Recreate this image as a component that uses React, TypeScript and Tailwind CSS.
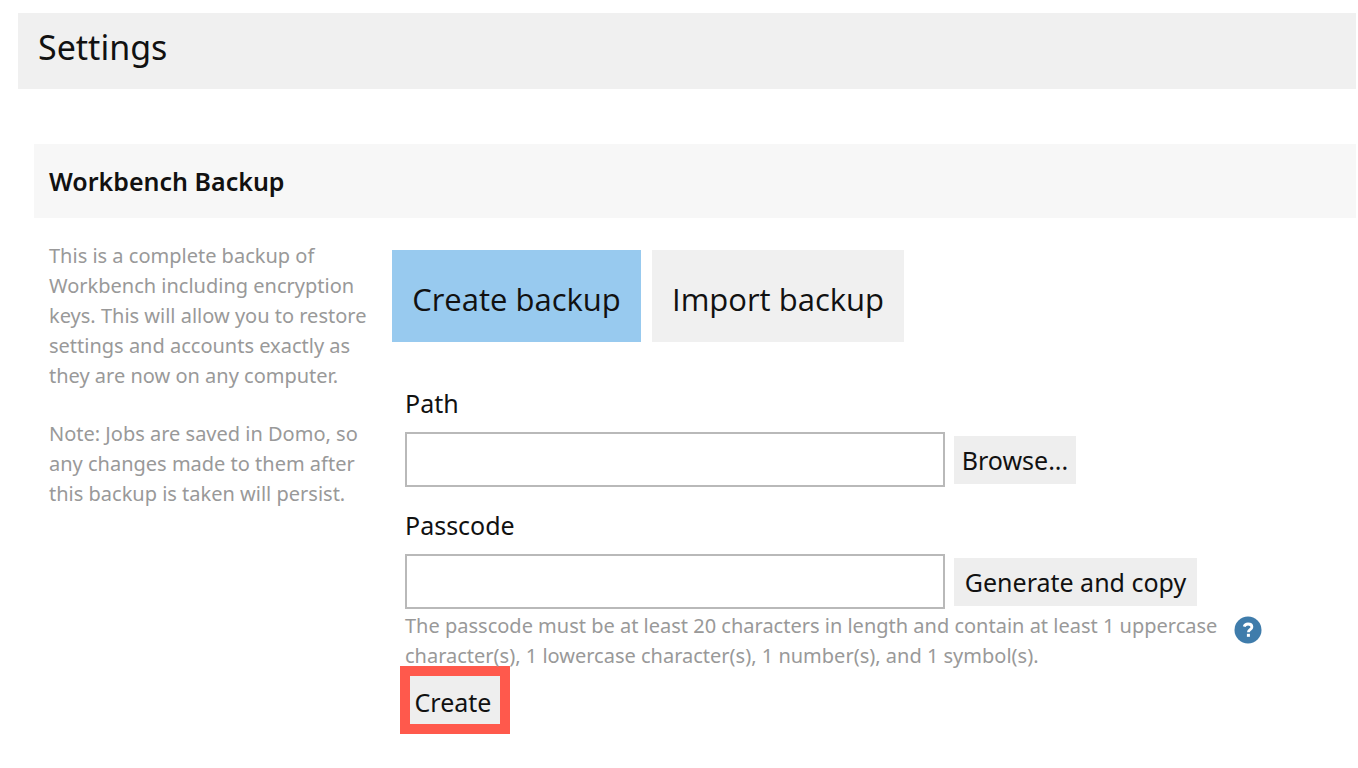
import { useState } from 'react';

const TABS = [
  { id: 'create', label: 'Create backup', width: 'w-[249px]' },
  { id: 'import', label: 'Import backup', width: 'w-[252px]' },
];

const ABOUT = [
  [
    'This is a complete backup of',
    'Workbench including encryption',
    'keys. This will allow you to restore',
    'settings and accounts exactly as',
    'they are now on any computer.',
  ],
  [
    'Note: Jobs are saved in Domo, so',
    'any changes made to them after',
    'this backup is taken will persist.',
  ],
];

const HelpIcon = () => (
  <svg viewBox="0 0 28 28" className="size-7" aria-hidden="true">
    <circle cx="14" cy="14" r="13.5" fill="#3f7cab" />
    <path d="M10.2 10.6C10.8 8.7 12.2 8 14 8c2.300 0 3.900 1.100 3.900 3 0 2.700-3.500 2.700-3.500 5.200" fill="none" stroke="#fff" strokeWidth="2.8" />
    <rect x="12.900" y="17.800" width="3" height="3" fill="#fff" />
  </svg>
);

function Field({ id, label, action, actionWidth }: { id: string; label: string; action: string; actionWidth: string }) {
  return (
    <div>
      <label htmlFor={id} className="block text-[25px] leading-[34px]">{label}</label>
      <div className="mt-3 flex items-center gap-[9px]">
        <input id={id} type="text" className="h-[55px] w-full min-w-0 max-w-[540px] border-2 border-[#b9b9b9] bg-white px-3 text-[25px] outline-none" />
        <button type="button" className={`h-12 shrink-0 bg-[#eeeeee] pt-[2px] text-[25px] whitespace-nowrap ${actionWidth}`}>{action}</button>
      </div>
    </div>
  );
}

export default function App() {
  const [tab, setTab] = useState('create');

  return (
    <div className="bg-white pt-[13px] pr-[2px] pl-[18px] font-['Noto_Sans','Open_Sans',sans-serif] text-[#111111]">
      <header className="flex h-[76px] items-center bg-[#f0f0f0] px-5 pb-2">
        <h1 className="text-[34px] leading-10">Settings</h1>
      </header>

      <main className="mt-[55px] pl-4">
        <div className="flex h-[74px] items-center bg-[#f7f7f7] px-[15px]">
          <h2 className="text-[25px] leading-9 font-semibold">Workbench Backup</h2>
        </div>

        <div className="flex pt-[23px]">
          <aside className="w-[358px] shrink-0 space-y-7 pl-[15px] text-[20px] leading-[30px] text-[#999999]">
            {ABOUT.map((lines) => (
              <p key={lines[0]}>
                {lines.map((line) => (
                  <span key={line} className="block whitespace-nowrap">{line}</span>
                ))}
              </p>
            ))}
          </aside>

          <section className="min-w-0 flex-1 pt-[9px]">
            <div className="flex gap-[11px] font-['Open_Sans','Noto_Sans',sans-serif]">
              {TABS.map((t) => (
                <button
                  key={t.id}
                  type="button"
                  aria-pressed={tab === t.id}
                  onClick={() => setTab(t.id)}
                  className={`h-[92px] pt-[6px] text-[31px] whitespace-nowrap ${t.width} ${tab === t.id ? 'bg-[#98caef]' : 'bg-[#f0f0f0]'}`}
                >
                  {t.label}
                </button>
              ))}
            </div>

            <form className="mt-11 pl-[13px]" onSubmit={(e) => e.preventDefault()}>
              <div className="space-y-[21px]">
                <Field id="path" label="Path" action="Browse..." actionWidth="w-[122px]" />
                <Field id="passcode" label="Passcode" action="Generate and copy" actionWidth="w-[243px]" />
              </div>

              <div className="mt-[2px] flex gap-[17px]">
                <p className="text-[20px] leading-[30px] whitespace-nowrap text-[#999999]">
                  The passcode must be at least 20 characters in length and contain at least 1 uppercase
                  <br />
                  character(s), 1 lowercase character(s), 1 number(s), and 1 symbol(s).
                </p>
                <button type="button" aria-label="Passcode help" className="mt-[5px] size-7 shrink-0">
                  <HelpIcon />
                </button>
              </div>

              {/* callout around the submit button */}
              <div className="-mt-[5px] -ml-[5px] w-fit border-[10px] border-[#ff594c]">
                <button type="submit" className="block h-12 w-[90px] bg-[#eeeeee] pt-[6px] pr-1 text-[25px]">Create</button>
              </div>
            </form>
          </section>
        </div>
      </main>
    </div>
  );
}
